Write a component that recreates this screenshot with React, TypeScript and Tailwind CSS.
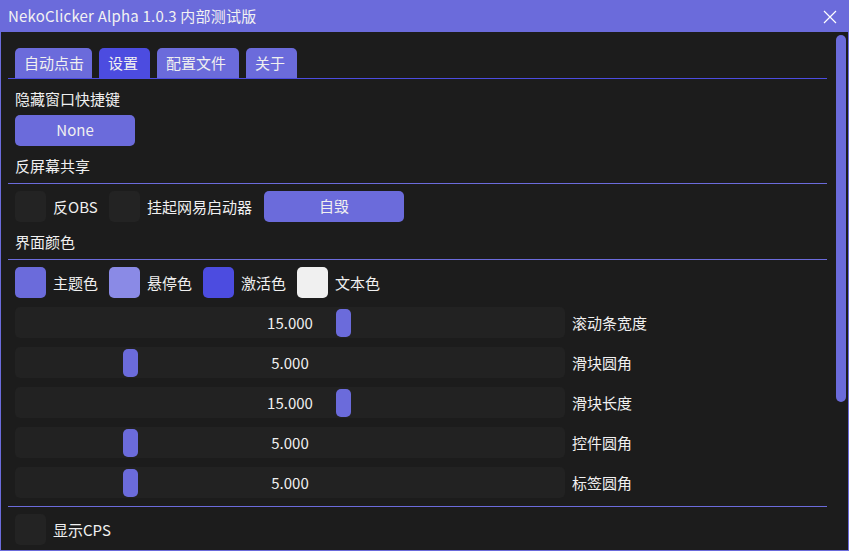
import React from "react";

const FONT = { fontFamily: '"Noto Sans CJK SC", "Noto Sans", sans-serif' };

const tabs = [
  { label: "自动点击", w: "w-[77px]", active: false },
  { label: "设置", w: "w-[51px]", active: true },
  { label: "配置文件", w: "w-[82px]", active: false },
  { label: "关于", w: "w-[51px]", active: false },
];

const swatches = [
  { label: "主题色", color: "bg-[#6b6bdb]" },
  { label: "悬停色", color: "bg-[#8a8ae6]" },
  { label: "激活色", color: "bg-[#4c4ce0]" },
  { label: "文本色", color: "bg-[#f0f0f0]" },
];

const sliders = [
  { value: 15, label: "滚动条宽度" },
  { value: 5, label: "滑块圆角" },
  { value: 15, label: "滑块长度" },
  { value: 5, label: "控件圆角" },
  { value: 5, label: "标签圆角" },
];

function Checkbox({ label, width }: { label: string; width: string }) {
  return (
    <div className={`flex items-center ${width}`}>
      <div className="w-[31px] h-[31px] rounded-[5px] bg-[#232323]" />
      <span className="ml-[7px] text-[15px] leading-[20px]">{label}</span>
    </div>
  );
}

function Separator() {
  return <div className="h-px bg-[#6b6bdb] mr-[21px]" />;
}

function Slider({ value, label }: { value: number; label: string }) {
  // range 0..25, track inner 531px
  const left = 2 + (value / 25) * 531;
  return (
    <div className="flex items-center h-[31px]">
      <div className="relative w-[550px] h-[31px] rounded-[5px] bg-[#222222] flex items-center justify-center">
        <div
          className="absolute top-[2px] w-[15px] h-[28px] rounded-[5px] bg-[#6b6bdb]"
          style={{ left }}
        />
        <span className="relative text-[15px] leading-[20px]">{value.toFixed(3)}</span>
      </div>
      <span className="ml-[7px] text-[15px] leading-[20px]">{label}</span>
    </div>
  );
}

export default function App() {
  return (
    <div className="w-[849px] h-[551px] flex flex-col bg-[#1c1c1c] text-[#f0f0f0] overflow-hidden" style={FONT}>
      {/* Title bar */}
      <div className="h-[32px] shrink-0 bg-[#6b6bdb] flex items-center justify-between pl-[8px] pr-[12px]">
        <span className="text-[15px] leading-[20px] text-[#f2f2f2] tracking-[0.2px]">NekoClicker Alpha 1.0.3 内部测试版</span>
        <svg width="14" height="14" viewBox="0 0 14 14" className="mt-[1px]">
          <path d="M1 1L13 13M13 1L1 13" stroke="#ffffff" strokeWidth="1.2" />
        </svg>
      </div>

      {/* Body */}
      <div className="relative flex-1 border-l border-r border-b border-[#6b6bdb] pl-[7px] pt-[16px]">
        {/* Tabs */}
        <div className="flex gap-[7px] pl-[7px] h-[30px] items-end">
          {tabs.map((t) => (
            <div
              key={t.label}
              className={`${t.w} h-[30px] rounded-t-[5px] pl-[9px] flex items-center text-[15px] leading-[20px] ${
                t.active ? "bg-[#4c4ce0]" : "bg-[#6b6bdb]"
              }`}
            >
              {t.label}
            </div>
          ))}
        </div>
        <div className="h-px bg-[#4c4ce0] mr-[21px]" />

        <div className="pl-[7px]">
          <div className="mt-[10px] h-[20px] text-[15px] leading-[20px]">隐藏窗口快捷键</div>
          <div className="mt-[6px] w-[120px] h-[31px] rounded-[5px] bg-[#6b6bdb] flex items-center justify-center text-[15px]">
            None
          </div>
          <div className="mt-[10px] h-[20px] text-[15px] leading-[20px]">反屏幕共享</div>
        </div>
        <div className="mt-[7px]">
          <Separator />
        </div>
        <div className="pl-[7px] mt-[7px] flex items-center">
          <Checkbox label="反OBS" width="w-[94px]" />
          <Checkbox label="挂起网易启动器" width="w-[155px]" />
          <div className="w-[140px] h-[31px] rounded-[5px] bg-[#6b6bdb] flex items-center justify-center text-[15px]">
            自毁
          </div>
        </div>
        <div className="pl-[7px] mt-[10px] h-[20px] text-[15px] leading-[20px]">界面颜色</div>
        <div className="mt-[7px]">
          <Separator />
        </div>
        <div className="pl-[7px] mt-[7px] flex items-center">
          {swatches.map((s) => (
            <div key={s.label} className="flex items-center w-[94px]">
              <div className={`w-[31px] h-[31px] rounded-[5px] ${s.color}`} />
              <span className="ml-[7px] text-[15px] leading-[20px]">{s.label}</span>
            </div>
          ))}
        </div>
        <div className="pl-[7px] mt-[9px] flex flex-col gap-[9px]">
          {sliders.map((s) => (
            <Slider key={s.label} value={s.value} label={s.label} />
          ))}
        </div>
        <div className="mt-[8px]">
          <Separator />
        </div>
        <div className="pl-[7px] mt-[7px] flex items-center">
          <Checkbox label="显示CPS" width="w-[120px]" />
        </div>

        {/* Scrollbar */}
        <div className="absolute right-[2px] top-[3px] w-[10px] h-[367px] rounded-full bg-[#6b6bdb]" />
      </div>
    </div>
  );
}
